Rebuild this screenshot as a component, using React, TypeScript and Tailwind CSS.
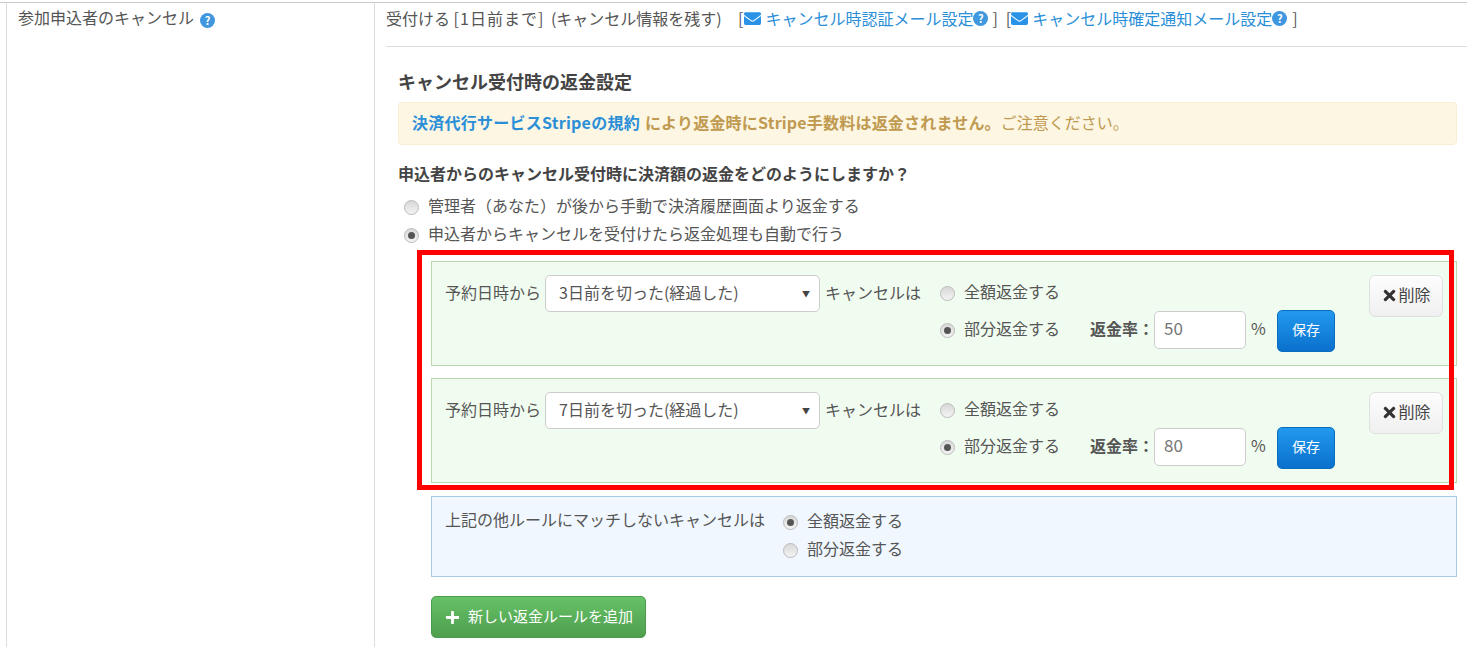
import React from "react";
import { FaEnvelope, FaTimes, FaPlus } from "react-icons/fa";

const Help = () => (
  <span className="inline-flex h-[15px] w-[15px] shrink-0 items-center justify-center rounded-full bg-[#3f97e0] text-[11px] font-bold leading-none text-white">?</span>
);

const Radio = ({ on }: { on?: boolean }) => (
  <span className="flex h-[15px] w-[15px] shrink-0 items-center justify-center rounded-full border border-[#bbbbbb] bg-gradient-to-b from-[#d8d8d8] to-[#f4f4f4]">
    {on && <span className="h-[7px] w-[7px] rounded-full bg-[#555555]" />}
  </span>
);

const RadioRow = ({ on, label, className }: { on?: boolean; label: string; className?: string }) => (
  <div className={"flex items-center gap-[9px] whitespace-nowrap " + (className ?? "")}>
    <Radio on={on} />
    <span className="pb-[4px]">{label}</span>
  </div>
);

const Rule = ({ days, rate, last }: { days: string; rate: string; last?: boolean }) => (
  <div className={"flex h-[105px] items-start border border-[#b9d8b0] bg-[#f1fcf0] pl-[13px] pr-[13px] pt-[13px] " + (last ? "" : "mb-[12px]")}>
    <span className="mt-[5px] w-[100px] shrink-0 whitespace-nowrap">予約日時から</span>
    <div className="flex h-[37px] w-[275px] shrink-0 items-center justify-between rounded-[5px] border border-[#cccccc] bg-white pl-[13px] pr-[9px]">
      <span className="pb-[4px]">{days}</span>
      <span className="text-[8px] text-[#444444]">▼</span>
    </div>
    <span className="ml-[5px] mt-[5px] w-[115px] shrink-0 whitespace-nowrap">キャンセルは</span>
    <div className="flex flex-col">
      <RadioRow label="全額返金する" className="mt-[6px] h-[24px]" />
      <div className="mt-[5px] flex h-[42px] items-center">
        <RadioRow on label="部分返金する" className="w-[150px] pb-[2px]" />
        <span className="w-[64px] whitespace-nowrap pb-[6px] font-bold">返金率：</span>
        <div className="mb-[2px] flex h-[38px] w-[92px] items-center rounded-[5px] border border-[#cccccc] bg-white pb-[5px] pl-[9px] text-[17px] text-[#777777]">{rate}</div>
        <span className="ml-[5px] w-[26px] pb-[6px]">%</span>
        <div className="flex h-[42px] w-[58px] items-center justify-center rounded-[5px] border border-[#0a6ec0] bg-gradient-to-b from-[#2299ee] to-[#0a70cc] pb-[4px] text-[14px] text-white">保存</div>
      </div>
    </div>
    <div className="ml-auto flex h-[42px] w-[74px] items-center justify-center rounded-[6px] border border-[#e0e0e0] bg-gradient-to-b from-[#fdfdfd] to-[#f0f0f0] pb-[4px] text-[#444444]">
      <FaTimes className="mt-[3px] text-[17px] text-[#333333]" />
      <span>削除</span>
    </div>
  </div>
);

export default function App() {
  return (
    <div className="relative h-[647px] w-[1467px] overflow-hidden bg-white pt-[2px] text-[16px] leading-[24px] text-[#555555] [font-family:'Noto_Sans_CJK_JP','Liberation_Sans',sans-serif]">
      <div className="flex h-[645px] border-t border-[#cccccc] pl-[6px]">
        <div className="flex h-full w-[369px] shrink-0 items-start gap-[5px] border-x border-[#dddddd] pl-[11px] pt-[2px]">
          <span className="whitespace-nowrap">参加申込者のキャンセル</span>
          <span className="mt-[1px] pl-[1px]"><Help /></span>
        </div>
        <div className="min-w-0 flex-1 pl-[11px]">
          <div className="flex h-[44px] items-start whitespace-nowrap border-b border-[#dddddd] pt-[3px]">
            <span className="w-[352px]">受付ける <span className="tracking-[1px]">[1日前まで]</span><span className="pl-[3px]"> (キャンセル情報を残す)</span></span>
            <span>[</span>
            <span className="flex items-center text-[#2b8fd8]">
              <FaEnvelope className="ml-[1px] mr-[3px] text-[17px] text-[#2a93e8]" />
              <span className="ml-[1px]">キャンセル時認証メール設定</span>
              <Help />
            </span>
            <span className="ml-[4px] mr-[8px]">]</span>
            <span>[</span>
            <span className="flex items-center text-[#2b8fd8]">
              <FaEnvelope className="mr-[3px] text-[17px] text-[#2a93e8]" />
              <span className="ml-[1px]">キャンセル時確定通知メール設定</span>
              <Help />
            </span>
            <span className="ml-[5px]">]</span>
          </div>
          <div className="pl-[12px] pr-[10px]">
            <h2 className="mt-[21px] h-[34px] text-[18px] font-bold leading-[26px] text-[#444444]">キャンセル受付時の返金設定</h2>
            <div className="flex h-[43px] items-center rounded-[4px] border border-[#f8eed6] bg-[#fcf6e3] pb-[4px] pl-[13px] font-bold text-[#c09a50]">
              <span className="tracking-[0.25px] text-[#2b8fd8]">決済代行サービスStripeの規約</span>
              <span className="ml-[5px] tracking-[0.2px]">により返金時にStripe手数料は返金されません。</span>
              <span className="font-normal">ご注意ください。</span>
            </div>
            <p className="mt-[16px] h-[26px] font-bold text-[#444444]">申込者からのキャンセル受付時に決済額の返金をどのようにしますか？</p>
            <div className="ml-[6px] mt-[6px] flex flex-col">
              <RadioRow label="管理者（あなた）が後から手動で決済履歴画面より返金する" className="h-[28px]" />
              <RadioRow on label="申込者からキャンセルを受付けたら返金処理も自動で行う" className="h-[28px]" />
            </div>
            <div className="ml-[33px] mt-[12px]">
              <Rule days="3日前を切った(経過した)" rate="50" />
              <Rule days="7日前を切った(経過した)" rate="80" last />
              <div className="mt-[13px] flex h-[81px] items-start border border-[#a5cbe8] bg-[#f0f7ff] pl-[13px] pt-[11px]">
                <span className="-mt-[1px] w-[338px] whitespace-nowrap">上記の他ルールにマッチしないキャンセルは</span>
                <div className="flex flex-col">
                  <RadioRow on label="全額返金する" className="h-[28px]" />
                  <RadioRow label="部分返金する" className="h-[28px]" />
                </div>
              </div>
              <div className="mt-[19px] flex h-[42px] w-[215px] items-center gap-[8px] rounded-[5px] border border-[#4c9a4c] bg-gradient-to-b from-[#66c266] to-[#4f9e4f] pl-[13px] text-[15px] text-white">
                <FaPlus className="text-[15px]" />
                <span className="pb-[2px]">新しい返金ルールを追加</span>
              </div>
            </div>
          </div>
        </div>
      </div>
      <div className="pointer-events-none absolute left-[417px] top-[250px] h-[240px] w-[1037px] border-[5px] border-[#ff0000]" />
    </div>
  );
}
